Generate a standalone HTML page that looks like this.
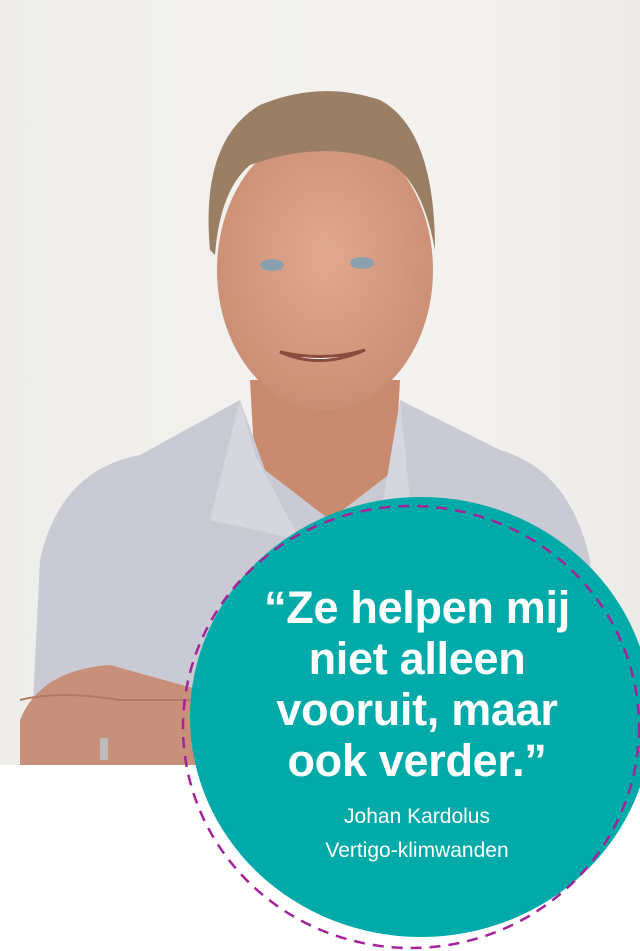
<!DOCTYPE html>
<html><head><meta charset="utf-8"><style>
html,body{margin:0;padding:0;background:#fff}
#w{position:relative;width:640px;height:951px;overflow:hidden;background:#fff}
svg{position:absolute;left:0;top:0}
.q{position:absolute;left:210px;width:414px;text-align:center;color:#fff;font-family:"Liberation Sans",sans-serif}
.b{top:582px;font-weight:bold;font-size:45px;line-height:51px;letter-spacing:-0.3px}
.n{top:800px;font-size:21px;line-height:34px}
</style></head><body><div id="w">
<svg width="640" height="951" viewBox="0 0 640 951">
<defs>
<linearGradient id="bg" x1="0" y1="0" x2="1" y2="0"><stop offset="0" stop-color="#eeede9"/><stop offset="0.6" stop-color="#f4f3f0"/><stop offset="1" stop-color="#ecebe7"/></linearGradient>
<radialGradient id="sk" cx="0.5" cy="0.45" r="0.6"><stop offset="0" stop-color="#e2a98f"/><stop offset="1" stop-color="#c98c73"/></radialGradient>
</defs>
<rect x="0" y="0" width="640" height="765" fill="url(#bg)"/>
<path d="M250 380 L400 380 L395 470 L330 520 L255 470 Z" fill="#c98b70"/>
<path d="M30 765 L40 560 Q60 470 140 455 L240 400 L265 470 L330 520 L395 470 L400 400 L500 450 Q570 470 590 560 L600 765 Z" fill="#c9cad3"/>
<path d="M240 400 L210 520 L300 540 L255 455 Z" fill="#d6d7de"/>
<path d="M400 400 L410 500 L380 520 Z" fill="#d6d7de"/>
<path d="M20 720 Q40 670 110 665 L200 690 L200 765 L20 765 Z" fill="#c8907a"/>
<path d="M20 700 Q60 690 120 700 L200 700" stroke="#b27a64" stroke-width="2" fill="none"/>
<rect x="100" y="738" width="8" height="22" fill="#bbb"/>
<ellipse cx="325" cy="270" rx="108" ry="140" fill="url(#sk)"/>
<path d="M210 250 Q200 140 260 105 Q320 80 380 100 Q435 130 435 250 Q420 170 380 160 Q320 140 250 165 Q220 190 215 255 Z" fill="#9a7f64"/>
<ellipse cx="272" cy="265" rx="12" ry="6" fill="#8aa1ad"/>
<ellipse cx="362" cy="263" rx="12" ry="6" fill="#8aa1ad"/>
<path d="M280 352 Q320 370 365 350 Q325 362 280 352Z" fill="#fff" stroke="#8a4a3c" stroke-width="3"/>
<ellipse cx="421" cy="717" rx="231" ry="220" fill="#00aaa8"/>
<ellipse cx="411" cy="727" rx="228" ry="221" fill="none" stroke="#a3239a" stroke-width="2.5" stroke-dasharray="11 8"/>
</svg>
<div class="q b">“Ze helpen mij<br>niet alleen<br>vooruit, maar<br>ook verder.”</div>
<div class="q n">Johan Kardolus<br>Vertigo-klimwanden</div>
</div></body></html>
